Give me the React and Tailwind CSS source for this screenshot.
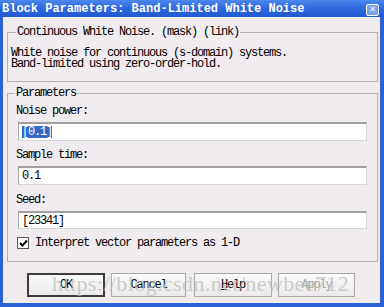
import React from 'react';

const mono = "font-['Liberation_Mono','DejaVu_Sans_Mono',monospace]";

const TextField = ({ value, selected, h = 'h-[19px]' }) => (
  <div
    className={`${h} mx-[10px] bg-white border border-[#d6d6d6] border-t-2 border-t-[#9f9f9f] border-l-[#a8a8a8] flex items-center pl-[3px]`}
  >
    <span
      className={`text-[12px] leading-[12px] tracking-[-1.2px] ${selected ? 'bg-[#3168c8] text-white' : 'text-black'}`}
    >
      {value}
    </span>
  </div>
);

const Button = ({ children, primary, disabled, w }) => (
  <div
    className={`${w} h-[24px] flex items-center justify-center bg-gradient-to-b from-[#fafafa] to-[#ebe9ea] text-[12px] tracking-[-1.2px] ${
      primary ? 'border-2 border-[#3c3c3c]' : 'border border-[#a9a9a9]'
    } ${disabled ? 'text-[#a3a3a3]' : 'text-black'}`}
  >
    {children}
  </div>
);

export default function App() {
  return (
    <div className={`w-[384px] h-[307px] flex flex-col bg-[#2c62d6] ${mono} relative overflow-hidden`}>
      {/* title bar */}
      <div className="h-[17px] flex items-center justify-between pl-[2px] pr-[5px] bg-gradient-to-b from-[#4c88ee] via-[#2c68de] to-[#2258d0]">
        <span className="text-white font-bold text-[12px] leading-[12px]">
          Block Parameters: Band-Limited White Noise
        </span>
        <div className="w-[13px] h-[12px] mt-[2px] rounded-[2px] border border-white bg-[#7aa2ea] flex items-center justify-center text-white text-[10px] font-bold leading-none">
          ✕
        </div>
      </div>

      {/* body */}
      <div className="flex-1 ml-[3px] mr-[4px] mb-[4px] bg-[#efebef] flex flex-col pl-[4px] pr-[2px] text-black text-[12px] leading-[12px] tracking-[-1.2px]">
        {/* description group */}
        <div className="relative mt-[15px] h-[50px] border border-[#b2b2b2]">
          <span className="absolute -top-[7px] left-[8px] px-[1px] bg-[#efebef]">
            Continuous White Noise. (mask) (link)
          </span>
          <div className="pl-[3px] pt-[14px] flex flex-col">
            <span className="h-[11px]">White noise for continuous (s-domain) systems.</span>
            <span className="h-[11px]">Band-limited using zero-order-hold.</span>
          </div>
        </div>

        {/* parameters group */}
        <div className="relative mt-[11px] h-[169px] border border-[#b2b2b2] flex flex-col">
          <span className="absolute -top-[7px] left-[7px] px-[1px] bg-[#efebef]">Parameters</span>
          <span className="mt-[11px] ml-[8px]">Noise power:</span>
          <div className="mt-[5px]">
            <TextField value="[0.1]" selected />
          </div>
          <span className="mt-[8px] ml-[8px]">Sample time:</span>
          <div className="mt-[5px]">
            <TextField value="0.1" />
          </div>
          <span className="mt-[9px] ml-[8px]">Seed:</span>
          <div className="mt-[5px]">
            <TextField value="[23341]" h="h-[18px]" />
          </div>
          <div className="mt-[8px] ml-[9px] flex items-center gap-[6px]">
            <div className="w-[12px] h-[12px] bg-white border border-[#5a5a5a] flex items-center justify-center">
              <svg width="9" height="9" viewBox="0 0 9 9">
                <path d="M1 4 L3.5 6.5 L8 1.5" stroke="#000" strokeWidth="2" fill="none" />
              </svg>
            </div>
            <span>Interpret vector parameters as 1-D</span>
          </div>
        </div>

        {/* buttons */}
        <div className="mt-[11px] flex pl-[20px]">
          <Button primary w="w-[78px]">OK</Button>
          <div className="w-[6px]" />
          <Button w="w-[75px]">Cancel</Button>
          <div className="w-[8px]" />
          <Button w="w-[78px]">
            <span className="underline">H</span>elp
          </Button>
          <div className="w-[6px]" />
          <Button disabled w="w-[77px]">Apply</Button>
        </div>
      </div>

      {/* watermark */}
      <span className="absolute left-[52px] top-[272px] font-['Liberation_Serif',serif] text-[22px] leading-[24px] text-[#b8b8b8]/70 tracking-[0.4px] pointer-events-none">
        https://blog.csdn.net/newbee712
      </span>
    </div>
  );
}
